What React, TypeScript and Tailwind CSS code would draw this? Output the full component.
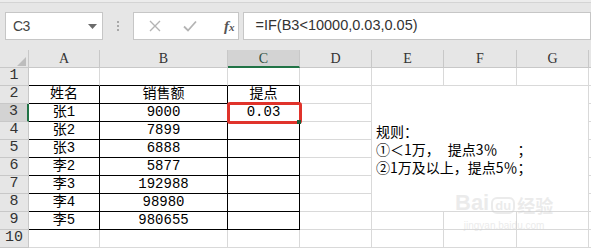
import React from "react";

const cols = ["A", "B", "C", "D", "E", "F", "G", "H"];

const data: Record<string, string> = {
  A2: "姓名",
  B2: "销售额",
  C2: "提点",
  A3: "张1",
  B3: "9000",
  C3: "0.03",
  A4: "张2",
  B4: "7899",
  A5: "张3",
  B5: "6888",
  A6: "李2",
  B6: "5877",
  A7: "李3",
  B7: "192988",
  A8: "李4",
  B8: "98980",
  A9: "李5",
  B9: "980655",
};

function cellBorder(r: number, c: number): string {
  const inTable = c <= 2 && r >= 2 && r <= 9;
  const aboveTable = c <= 2 && r === 1;
  if (inTable) return "border-r border-b border-black";
  if (aboveTable) return "border-r border-b border-r-[#d9d9d9] border-b-black";
  return "border-r border-b border-[#d9d9d9]";
}

export default function App() {
  const rows = Array.from({ length: 10 }, (_, i) => i + 1);
  return (
    <div className="w-[591px] h-[252px] overflow-hidden bg-white relative font-['Liberation_Sans',sans-serif]">
      {/* top formula area */}
      <div className="h-[50px] bg-[#e6e6e6] flex flex-col">
        <div className="h-[3px] bg-[#ececec] border-b border-[#d4d4d4]" />
        <div className="flex items-center pl-[5px] pt-[9px]">
          <div className="w-[101px] h-[28px] bg-white border border-[#c6c6c6] flex items-center justify-between pl-[7px] pr-[5px]">
            <span className="text-[14px] text-[#444] tracking-[-0.5px]">C3</span>
            <svg width="9" height="5" viewBox="0 0 9 5">
              <polygon points="0,0 9,0 4.5,5" fill="#6b6b6b" />
            </svg>
          </div>
          <div className="w-[31px] h-[28px] flex flex-col items-center justify-center gap-[2px]">
            <div className="w-[2px] h-[2px] bg-[#a8a8a8]" />
            <div className="w-[2px] h-[2px] bg-[#a8a8a8]" />
            <div className="w-[2px] h-[2px] bg-[#a8a8a8]" />
          </div>
          <div className="w-[109px] h-[28px] bg-white border border-[#c6c6c6] flex items-center">
            <svg width="14" height="14" viewBox="0 0 14 14" className="ml-[14px]">
              <path d="M2 2 L12 12 M12 2 L2 12" stroke="#b4b4b4" strokeWidth="1.4" />
            </svg>
            <svg width="16" height="14" viewBox="0 0 16 14" className="ml-[20px]">
              <path d="M2 7.5 L6 11.5 L14 2.5" stroke="#b4b4b4" strokeWidth="1.8" fill="none" />
            </svg>
            <span className="ml-[26px] font-['Liberation_Serif',serif] italic font-bold text-[15px] text-[#555] leading-none">
              f<span className="text-[11px]">x</span>
            </span>
          </div>
          <div className="ml-[4px] w-[360px] h-[28px] bg-white border border-[#c6c6c6] flex items-center pl-[12px]">
            <span className="text-[14.5px] text-[#333]">=IF(B3&lt;10000,0.03,0.05)</span>
          </div>
        </div>
      </div>

      {/* grid */}
      <div className="relative">
        <div className="grid grid-cols-[29px_71px_128px_72px_72px_72px_73px_72px_72px] grid-rows-[18px_repeat(10,18px)] font-['Liberation_Mono','Noto_Sans_CJK_SC',monospace]">
          {/* header row */}
          <div className="bg-[#e6e6e6] border-r border-b border-[#c8c8c8] relative">
            <svg width="29" height="18" className="absolute left-0 top-0">
              <polygon points="17,16 26,7 26,16" fill="#bdbdbd" />
            </svg>
          </div>
          {cols.map((c) =>
            c === "C" ? (
              <div
                key={c}
                className="bg-[#d3d3d3] border-r border-[#c8c8c8] border-b-2 border-b-[#217346] flex items-center justify-center text-[14px] text-[#2f4f3f] font-['Liberation_Serif',serif]"
              >
                {c}
              </div>
            ) : (
              <div
                key={c}
                className="bg-[#e6e6e6] border-r border-b border-[#c8c8c8] flex items-center justify-center text-[14px] text-[#333] font-['Liberation_Serif',serif]"
              >
                {c}
              </div>
            )
          )}
          {rows.map((r) => (
            <React.Fragment key={r}>
              {r === 3 ? (
                <div className="bg-[#d3d3d3] border-r-2 border-r-[#217346] border-b border-b-[#c8c8c8] flex items-center justify-center text-[15px] text-[#333]">
                  {r}
                </div>
              ) : (
                <div className="bg-[#e6e6e6] border-r border-b border-[#c8c8c8] flex items-center justify-center text-[15px] text-[#333]">
                  {r}
                </div>
              )}
              {cols.map((c, ci) => {
                const inMerge = ci >= 4 && ci <= 6 && r >= 2 && r <= 8;
                if (inMerge) {
                  if (ci === 4 && r === 2) {
                    return (
                      <div
                        key={c + r}
                        className="col-start-6 col-span-3 row-start-3 row-span-7 border-r border-b border-[#d9d9d9] flex flex-col justify-center pl-[4px] text-[14px] leading-[18px] text-black font-['Noto_Sans_CJK_SC',sans-serif] whitespace-pre"
                      >
                        <div>规则：</div>
                        <div className="flex">
                          <span>①＜1万，</span>
                          <span className="ml-[8px]">提点3％</span>
                          <span className="ml-[20px]">；</span>
                        </div>
                        <div>②1万及以上，提点5％；</div>
                      </div>
                    );
                  }
                  return null;
                }
                const key = c + r;
                return (
                  <div
                    key={key}
                    className={
                      cellBorder(r, ci) +
                      " flex items-center justify-center text-[14px] text-black whitespace-nowrap"
                    }
                  >
                    {data[key] ?? ""}
                  </div>
                );
              })}
            </React.Fragment>
          ))}
        </div>
        {/* selection box */}
        <div className="absolute left-[227px] top-[52px] w-[75px] h-[22px] border-[3px] border-[#e0332b] rounded-[3px]" />
        <div className="absolute left-[297px] top-[70px] w-[4px] h-[4px] bg-[#1e5e3a]" />
        {/* watermark */}
        <div className="absolute left-[455px] top-[142px] flex flex-col items-center opacity-40 pointer-events-none">
          <div className="flex items-end gap-[2px] text-[#cfcfcf] text-[22px] font-bold leading-none font-['Liberation_Sans',sans-serif]">
            <span>Bai</span>
            <span className="text-[13px] border-2 border-[#cfcfcf] rounded-[6px] px-[2px]">du</span>
            <span className="font-['Noto_Sans_CJK_SC',sans-serif] text-[18px]">经验</span>
          </div>
          <div className="text-[10px] text-[#cfcfcf] mt-[4px]">jingyan.baidu.com</div>
        </div>
      </div>
    </div>
  );
}
